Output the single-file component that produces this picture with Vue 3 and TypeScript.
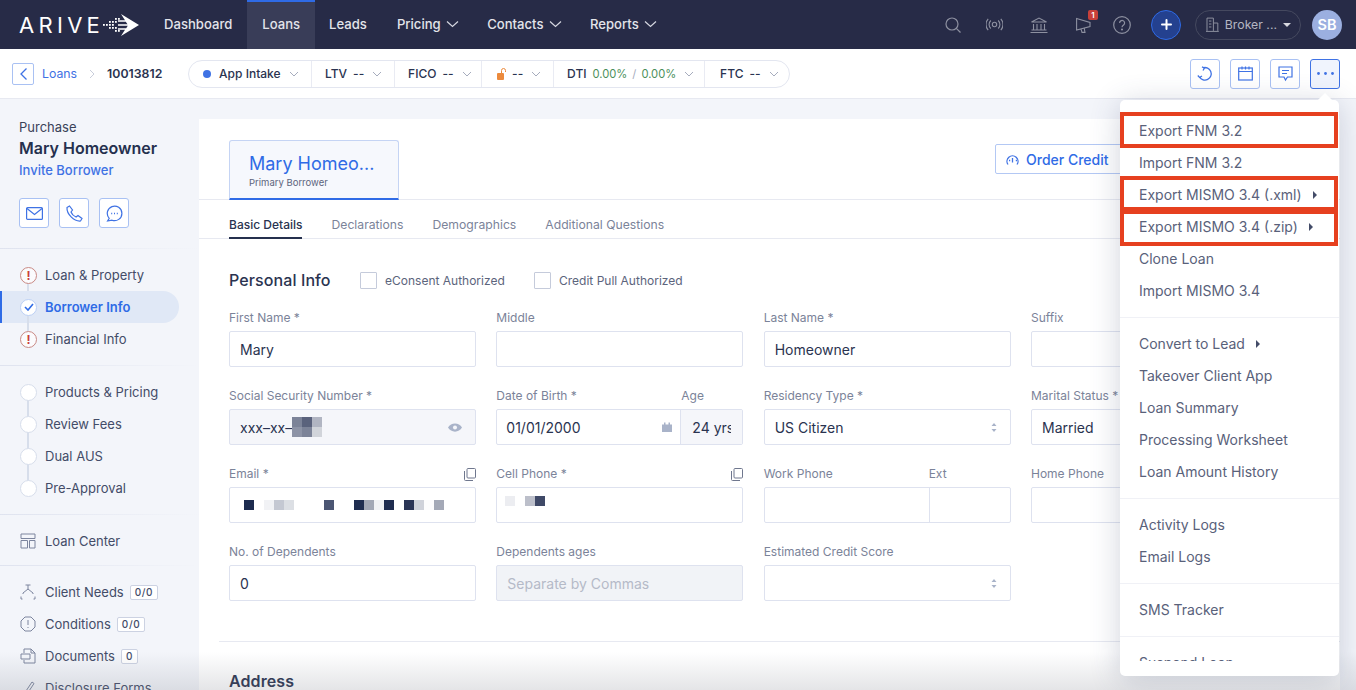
<script setup lang="ts">
const nav = [
  { t: 'Dashboard', active: false, caret: false },
  { t: 'Loans', active: true, caret: false },
  { t: 'Leads', active: false, caret: false },
  { t: 'Pricing', active: false, caret: true },
  { t: 'Contacts', active: false, caret: true },
  { t: 'Reports', active: false, caret: true }
]
const menuGroups = [
  [
    { t: 'Export FNM 3.2' },
    { t: 'Import FNM 3.2' },
    { t: 'Export MISMO 3.4 (.xml)', sub: true },
    { t: 'Export MISMO 3.4 (.zip)', sub: true },
    { t: 'Clone Loan' },
    { t: 'Import MISMO 3.4' }
  ],
  [
    { t: 'Convert to Lead', sub: true },
    { t: 'Takeover Client App' },
    { t: 'Loan Summary' },
    { t: 'Processing Worksheet' },
    { t: 'Loan Amount History' }
  ],
  [{ t: 'Activity Logs' }, { t: 'Email Logs' }],
  [{ t: 'SMS Tracker' }],
  [{ t: 'Suspend Loan' }]
]
const progress = ['Products & Pricing', 'Review Fees', 'Dual AUS', 'Pre-Approval']
const emailBlocks = ['#1d2b4f', '#fff', '#f1f2f5', '#c4c8d2', '#dcdfe4', '#fff', '#fff', '#fff', '#4c5673', '#fff', '#fff', '#1f2d50', '#a2a7b5', '#f0f1f4', '#1f2d50', '#fff', '#2a3556', '#cfd2da', '#fcfcfd', '#a4a9b7']
const phoneBlocks = ['#ecedf1', '#fff', '#bcbfca', '#3f4967']
const ssnBlocks = ['#7c8398', '#5a627c', '#b1b5c2', '#8d93a6', '#7c8398', '#d1d4da']
const logoDots = [
  [0, 10], [3, 10], [6, 7], [6, 10], [6, 13], [9, 7], [9, 10], [9, 13], [12, 4], [12, 7], [12, 13], [12, 16], [15, 4], [15, 16]
]
</script>

<template>
  <div class="page">
    <header class="top">
      <div class="logo">
        <span class="logo-text">ARIVE</span>
        <svg class="logo-mark" width="36" height="22" viewBox="0 0 36 22">
          <rect v-for="(d, i) in logoDots" :key="i" :x="d[0]" :y="d[1]" width="1.800" height="1.800" fill="#fff" />
          <path d="M18 0l18 11-18 11 4-6.200H15v-1.500h8.200l1.600-2.500H15v-1.500h9.500l-1.700-2.500H15V6.200h7z" fill="#fff" />
        </svg>
      </div>
      <nav class="nav">
        <a v-for="n in nav" :key="n.t" class="nav-item" :class="{ on: n.active, caret: n.caret }">
          {{ n.t }}
          <svg v-if="n.caret" width="13" height="8" viewBox="0 0 13 8"><path d="M1 1.500l5.500 5 5.500-5" fill="none" stroke="#d5d7e0" stroke-width="1.200" /></svg>
        </a>
      </nav>
      <div class="top-right">
        <svg class="ti search" width="16" height="16" viewBox="0 0 16 16" fill="none" stroke="#8d90a0" stroke-width="1.200"><circle cx="7" cy="7" r="6" /><path d="M11.300 11.300L15.500 15.500" /></svg>
        <svg class="ti cast" width="17" height="13" viewBox="0 0 17 13" fill="none" stroke="#8d90a0" stroke-width="1.100"><circle cx="8.500" cy="6.500" r="2.200" /><path d="M4.800 2.500a5.500 5.500 0 000 8M12.200 2.500a5.500 5.500 0 010 8M2.200 .8a8.500 8.500 0 000 11.400M14.800 .8a8.500 8.500 0 010 11.400" /></svg>
        <svg class="ti bank" width="18" height="16" viewBox="0 0 18 16" fill="none" stroke="#8d90a0" stroke-width="1.100"><path d="M1.500 5L9 1l7.500 4zM3.500 7v5.500M7 7v5.500M11 7v5.500M14.500 7v5.500M1.500 13h15M.5 15.500h17" /></svg>
        <span class="ti mega">
          <svg width="15" height="16" viewBox="0 0 15 16" fill="none" stroke="#8d90a0" stroke-width="1.100"><path d="M.6 1.500L14 5.500V9.500L.6 13zM5 11.800L6 15.400H9L8.200 11" /></svg>
          <i class="badge">1</i>
        </span>
        <svg class="ti help" width="18" height="18" viewBox="0 0 18 18" fill="none" stroke="#8d90a0" stroke-width="1.200"><circle cx="9" cy="9" r="8.300" /><path d="M6.600 7a2.500 2.500 0 114 2c-1 .7-1.600 1.100-1.600 2.300" /><circle cx="9" cy="13.500" r=".5" fill="#8d90a0" /></svg>
        <span class="plus">
          <svg width="11" height="11" viewBox="0 0 11 11"><path d="M5.500 1v9M1 5.500h9" stroke="#fff" stroke-width="2" stroke-linecap="round" /></svg>
        </span>
        <span class="broker">
          <svg width="13" height="15" viewBox="0 0 13 15" fill="none" stroke="#8d90a0" stroke-width="1"><path d="M1 14V1h6.500v13M7.500 6H12v8M0 14.500h13M3 4h2.500M3 7h2.500M3 10h2.500" /></svg>
          <span class="broker-t">Broker ...</span>
          <i class="tri"></i>
        </span>
        <span class="avatar">SB</span>
      </div>
    </header>

    <div class="sub">
      <span class="back"><svg width="9" height="14" viewBox="0 0 9 14"><path d="M7.500 1.500L2 7l5.500 5.500" fill="none" stroke="#3f72e4" stroke-width="1.300" /></svg></span>
      <a class="crumb">Loans</a>
      <svg class="crumb-sep" width="7" height="10" viewBox="0 0 7 10"><path d="M1 1l4 4-4 4" fill="none" stroke="#c9cedb" stroke-width="1" /></svg>
      <b class="loan-id">10013812</b>
      <div class="pill">
        <div class="seg s1"><i class="dot"></i>App Intake<svg class="chev" width="10" height="6" viewBox="0 0 10 6"><path d="M1 1l4 4 4-4" /></svg></div>
        <div class="seg s2">LTV<span class="dash">--</span><svg class="chev" width="10" height="6" viewBox="0 0 10 6"><path d="M1 1l4 4 4-4" /></svg></div>
        <div class="seg s3">FICO<span class="dash">--</span><svg class="chev" width="10" height="6" viewBox="0 0 10 6"><path d="M1 1l4 4 4-4" /></svg></div>
        <div class="seg s4">
          <svg width="9" height="12" viewBox="0 0 9 12"><rect x="0" y="5" width="7" height="7" rx="1" fill="#ec8a3c" /><path d="M4.500 5V2.500a2 2 0 014 0V4" fill="none" stroke="#ec8a3c" stroke-width="1" /></svg>
          <span class="dash">--</span><svg class="chev" width="10" height="6" viewBox="0 0 10 6"><path d="M1 1l4 4 4-4" /></svg>
        </div>
        <div class="seg s5">DTI<span class="green">0.00%</span><span class="slash">/</span><span class="green g2">0.00%</span><svg class="chev" width="10" height="6" viewBox="0 0 10 6"><path d="M1 1l4 4 4-4" /></svg></div>
        <div class="seg s6">FTC<span class="dash">--</span><svg class="chev" width="10" height="6" viewBox="0 0 10 6"><path d="M1 1l4 4 4-4" /></svg></div>
      </div>
      <div class="sub-actions">
        <span class="sq"><svg width="16" height="16" viewBox="0 0 16 16" fill="none" stroke="#3f72e4" stroke-width="1.300"><path d="M6 1.800A6.300 6.300 0 1 1 2.500 11M5 .8L7.500 2 6 4.500M.8 9.500l1.800 2L5 10" /></svg></span>
        <span class="sq"><svg width="15" height="15" viewBox="0 0 15 15" fill="none" stroke="#3f72e4" stroke-width="1.200"><rect x=".7" y="2" width="13.600" height="12" /><path d="M.7 5.500h13.600M4 .5v3M11 .5v3M7.500 .5v3" /></svg></span>
        <span class="sq"><svg width="15" height="16" viewBox="0 0 15 16" fill="none" stroke="#3f72e4" stroke-width="1.200"><path d="M1 1h13v10H9.500L7.500 14 6 11H1zM4 4.500h7M4 7.500h5" /></svg></span>
        <span class="sq act"><svg width="17" height="3" viewBox="0 0 17 3" fill="#3f72e4"><circle cx="1.500" cy="1.500" r="1.400" /><circle cx="8.500" cy="1.500" r="1.400" /><circle cx="15.500" cy="1.500" r="1.400" /></svg></span>
      </div>
    </div>

    <div class="body">
      <aside class="side">
        <section class="who">
          <div class="purpose">Purchase</div>
          <div class="name">Mary Homeowner</div>
          <a class="invite">Invite Borrower</a>
          <div class="contact">
            <span class="sq"><svg width="17" height="13" viewBox="0 0 17 13" fill="none" stroke="#3f72e4" stroke-width="1.200"><rect x=".6" y=".6" width="15.800" height="11.800" rx="1" /><path d="M1 1.500l7.500 6 7.500-6" /></svg></span>
            <span class="sq"><svg width="17" height="17" viewBox="0 0 17 17" fill="none" stroke="#3f72e4" stroke-width="1.200"><path d="M1 2.500L3.500 1l3 4L5 7c.8 2.200 2.500 4 5 5l2-1.500 4 3L14.500 16C8 16.500 .5 9 1 2.500z" /></svg></span>
            <span class="sq"><svg width="17" height="17" viewBox="0 0 17 17" fill="none" stroke="#3f72e4" stroke-width="1.200"><path d="M3.200 13.300A7.300 7.300 0 1 1 6 15.200L1.600 16z" /><path d="M5.200 8.500h1M8 8.500h1M10.800 8.500h1" stroke-width="1.300" /></svg></span>
          </div>
        </section>

        <section class="group steps">
          <div class="row"><span class="mark err">!</span>Loan &amp; Property</div>
          <div class="row cur"><span class="mark ok"><svg width="10" height="8" viewBox="0 0 10 8"><path d="M1 4l3 3 5-6" fill="none" stroke="#2f6be6" stroke-width="1.600" /></svg></span>Borrower Info</div>
          <div class="row"><span class="mark err">!</span>Financial Info</div>
        </section>

        <section class="group steps">
          <div v-for="p in progress" :key="p" class="row"><span class="mark"></span>{{ p }}</div>
        </section>

        <section class="group single">
          <div class="row">
            <svg class="ic" width="16" height="16" viewBox="0 0 16 16" fill="none" stroke="#7c859e" stroke-width="1"><path d="M1 1h14v4.500H1zM1 7.500h6.500V15H1zM9.500 7.500H15V15H9.500z" /></svg>
            Loan Center
          </div>
        </section>

        <section class="group tools">
          <div class="row">
            <svg class="ic" width="16" height="16" viewBox="0 0 16 16" fill="none" stroke="#7c859e" stroke-width="1"><path d="M5.500 1h5M8 1v4M8 5L3 9v1M8 5l5 4v1M1 15h1.500M13.500 15H15M1 12.500V15M15 12.500V15" /></svg>
            Client Needs<span class="count">0/0</span>
          </div>
          <div class="row">
            <svg class="ic" width="16" height="16" viewBox="0 0 16 16" fill="none" stroke="#7c859e" stroke-width="1"><path d="M5 1h6l4 4v6l-4 4H5l-4-4V5z" /><path d="M8 4v5M8 11v1" /></svg>
            Conditions<span class="count">0/0</span>
          </div>
          <div class="row">
            <svg class="ic" width="16" height="16" viewBox="0 0 16 16" fill="none" stroke="#7c859e" stroke-width="1"><path d="M4 5V1h7l4 4v10H4v-3M11 1v4h4M1 6h9v5H1z" /></svg>
            Documents<span class="count">0</span>
          </div>
          <div class="row">
            <svg class="ic" width="16" height="16" viewBox="0 0 16 16" fill="none" stroke="#7c859e" stroke-width="1"><path d="M1 12c2-3 3 1 5-1M6 11l6-9 2 1.500-6 9z" /></svg>
            Disclosure Forms
          </div>
        </section>
      </aside>

      <main class="card">
        <div class="card-head">
          <div class="borrower-tab">
            <div class="b-name">Mary Homeo...</div>
            <div class="b-role">Primary Borrower</div>
          </div>
          <button class="order">
            <svg width="13" height="11" viewBox="0 0 13 11" fill="none" stroke="#3f72e4" stroke-width="1.300"><path d="M2 10.500a5.500 5.500 0 1 1 9 0M6.500 4v4.500M3 6.500h1.200M9.800 6.500H11" /></svg>
            Order Credit
          </button>
        </div>
        <div class="tabs">
          <a class="tab on">Basic Details</a>
          <a class="tab">Declarations</a>
          <a class="tab">Demographics</a>
          <a class="tab">Additional Questions</a>
        </div>

        <div class="form">
          <div class="title-row">
            <h2>Personal Info</h2>
            <label class="chk"><i></i>eConsent Authorized</label>
            <label class="chk"><i></i>Credit Pull Authorized</label>
          </div>

          <div class="grid">
            <div class="f"><div class="lab">First Name *</div><div class="inp">Mary</div></div>
            <div class="f"><div class="lab">Middle</div><div class="inp"></div></div>
            <div class="f"><div class="lab">Last Name *</div><div class="inp">Homeowner</div></div>
            <div class="f"><div class="lab">Suffix</div><div class="inp"></div></div>

            <div class="f">
              <div class="lab">Social Security Number *</div>
              <div class="inp dis">
                <span>xxx–xx–</span>
                <span class="ssn"><i v-for="(c, i) in ssnBlocks" :key="i" :style="{ background: c }"></i></span>
                <svg class="end" width="14" height="9" viewBox="0 0 14 9"><path d="M0 4.500C3-1 11-1 14 4.500 11 10 3 10 0 4.500z" fill="#a9b3c9" /><circle cx="7" cy="4.500" r="2" fill="#f5f6fa" /></svg>
              </div>
            </div>
            <div class="f">
              <div class="lab split"><span>Date of Birth *</span><span class="age-lab">Age</span></div>
              <div class="inp dob">
                <span class="dob-v">01/01/2000<svg class="end" width="10" height="10" viewBox="0 0 10 10"><path d="M0 2.500h10V10H0zM2 .5h1.500v2H2zM6.500 .5H8v2H6.500z" fill="#a9b3c9" /></svg></span>
                <span class="age"><span class="age-t">24 yrs</span></span>
              </div>
            </div>
            <div class="f">
              <div class="lab">Residency Type *</div>
              <div class="inp">US Citizen<svg class="end" width="6" height="9" viewBox="0 0 6 9" fill="#a9b3c9"><path d="M3 0l2.500 3h-5zM3 9L.5 6h5z" /></svg></div>
            </div>
            <div class="f"><div class="lab">Marital Status *</div><div class="inp">Married</div></div>

            <div class="f">
              <div class="lab copy">Email *<svg width="12" height="13" viewBox="0 0 12 13" fill="none" stroke="#6f778e" stroke-width="1"><rect x="3" y=".5" width="8.500" height="9.500" rx="1" /><path d="M.5 3v8.500a1 1 0 001 1H9" /></svg></div>
              <div class="inp blur-row"><i v-for="(c, i) in emailBlocks" :key="i" :style="{ background: c }"></i></div>
            </div>
            <div class="f">
              <div class="lab copy">Cell Phone *<svg width="12" height="13" viewBox="0 0 12 13" fill="none" stroke="#6f778e" stroke-width="1"><rect x="3" y=".5" width="8.500" height="9.500" rx="1" /><path d="M.5 3v8.500a1 1 0 001 1H9" /></svg></div>
              <div class="inp blur-row phone"><i v-for="(c, i) in phoneBlocks" :key="i" :style="{ background: c }"></i></div>
            </div>
            <div class="f">
              <div class="lab split"><span>Work Phone</span><span class="ext-lab">Ext</span></div>
              <div class="inp work"><span></span><span class="ext"></span></div>
            </div>
            <div class="f"><div class="lab">Home Phone</div><div class="inp"></div></div>

            <div class="f"><div class="lab">No. of Dependents</div><div class="inp">0</div></div>
            <div class="f"><div class="lab">Dependents ages</div><div class="inp ph">Separate by Commas</div></div>
            <div class="f">
              <div class="lab">Estimated Credit Score</div>
              <div class="inp"><svg class="end" width="6" height="9" viewBox="0 0 6 9" fill="#a9b3c9"><path d="M3 0l2.500 3h-5zM3 9L.5 6h5z" /></svg></div>
            </div>
          </div>

          <hr class="rule" />
          <h2 class="addr">Address</h2>
        </div>
      </main>
    </div>

    <div class="fade"></div>

    <div class="menu">
      <i class="notch"></i>
      <div class="menu-scroll">
        <div v-for="(g, gi) in menuGroups" :key="gi" class="menu-group">
          <div v-for="m in g" :key="m.t" class="menu-item">
            {{ m.t }}<i v-if="m.sub" class="mtri"></i>
          </div>
        </div>
      </div>
      <div class="mark-box b1"></div>
      <div class="mark-box b2"></div>
      <div class="mark-box b3"></div>
    </div>
  </div>
</template>

<style>
html, body { margin: 0; overflow: hidden; }
</style>

<style scoped>
* { box-sizing: border-box; }
.page { position: relative; width: 1356px; height: 690px; overflow: hidden; font-family: Inter, "Liberation Sans", sans-serif; font-size: 13px; color: #2a3350; background: #f3f5fa; display: flex; flex-direction: column; }
.top { height: 49px; flex: none; background: #272b47; display: flex; align-items: stretch; color: #fff; padding-left: 19px; }
.logo { width: 130px; display: flex; align-items: center; }
.logo-text { font-size: 22px; font-weight: 400; letter-spacing: 4.300px; color: #fff; }
.logo-mark { margin-left: -1px; flex: none; }
.nav { display: flex; }
.nav-item { display: flex; align-items: center; gap: 6px; padding: 0 15px 4px; font-size: 13.100px; font-weight: 500; color: #e3e4ea; border-top: 2px solid transparent; }
.nav-item.on { background: #393d58; border-top-color: #2f6be6; }
.nav-item.on + .nav-item { padding-left: 14px; }
.nav-item.caret { gap: 5.500px; padding-right: 13px; }
.top-right { margin-left: auto; display: flex; align-items: center; padding-right: 14px; }
.ti { flex: none; }
.search { margin-right: 25px; }
.cast { margin-right: 27px; }
.bank { margin-right: 28px; }
.mega { position: relative; display: flex; margin-right: 22px; }
.badge { position: absolute; top: -7px; left: 12px; width: 10px; height: 10px; border-radius: 2px; background: #c9403a; color: #fff; font-style: normal; font-size: 8px; font-weight: 600; text-align: center; line-height: 10px; }
.plus { width: 30px; height: 30px; border-radius: 50%; background: #24418f; border: 1px solid #2f6be6; display: flex; align-items: center; justify-content: center; margin-left: 20px; margin-right: 14px; }
.broker { width: 106px; height: 30px; border: 1px solid #45495f; border-radius: 15px; display: flex; align-items: center; padding: 0 9px 0 10px; gap: 6px; color: #b4b6c2; font-size: 12.300px; margin-right: 11px; }
.broker-t { white-space: nowrap; }
.tri { margin-left: auto; width: 0; height: 0; border: 4px solid transparent; border-top: 4.500px solid #d8d9e0; border-bottom: 0; }
.avatar { width: 30px; height: 30px; border-radius: 50%; background: #9bafe0; color: #fff; font-size: 14.500px; font-weight: 600; display: flex; align-items: center; justify-content: center; }

.sub { height: 50px; flex: none; background: #fff; border-bottom: 1px solid #e7e9f1; display: flex; align-items: center; padding: 0 16px 0 12px; }
.back { width: 22px; height: 22px; border: 1px solid #a9c1f3; border-radius: 2px; display: flex; align-items: center; justify-content: center; margin-right: 8px; }
.crumb { color: #3f72e4; font-size: 12.300px; }
.crumb-sep { margin: 0 11px 0 12px; }
.loan-id { font-size: 12.300px; font-weight: 600; color: #2a3350; width: 81px; flex: none; }
.pill { display: flex; height: 28px; border: 1px solid #e3e6f0; border-radius: 14px; font-size: 12px; font-weight: 500; }
.seg { display: flex; align-items: center; padding-left: 13px; border-left: 1px solid #e9ebf3; }
.seg:first-child { border-left: 0; padding-left: 14px; }
.s1 { width: 122px; }
.s2 { width: 83px; }
.s3 { width: 87px; }
.s4 { width: 72px; padding-left: 15px; }
.s5 { width: 151px; }
.s6 { width: 85px; padding-left: 15px; }
.dot { width: 8px; height: 8px; border-radius: 50%; background: #3f72e4; margin-right: 8px; }
.dash { margin-left: 6px; }
.chev { margin-left: 8px; fill: none; stroke: #a6acbd; stroke-width: 1; }
.green { color: #4b8f5a; font-size: 11.200px; font-weight: 400; margin-left: 6px; }
.green.g2 { margin-left: 5px; }
.slash { color: #a6acbd; font-size: 11.200px; margin-left: 5px; font-weight: 400; }
.sub-actions { margin-left: auto; display: flex; gap: 10px; }
.sq { width: 30px; height: 30px; border: 1px solid #a9c1f3; border-radius: 3px; background: #fff; display: flex; align-items: center; justify-content: center; }
.sq.act { background: #f0f4fd; border-color: #3f72e4; }

.body { flex: 1; display: flex; min-height: 0; }
.side { width: 199px; flex: none; padding-top: 20px; overflow: hidden; }
.who { padding: 0 0 20px 19px; }
.purpose { font-size: 13px; line-height: 16px; color: #3a4258; }
.name { font-size: 16px; font-weight: 600; line-height: 26px; color: #25304e; }
.invite { display: block; font-size: 13px; font-weight: 500; line-height: 18px; color: #3f72e4; }
.contact { display: flex; gap: 10px; margin-top: 19px; }
.group { border-top: 1px solid; border-image: linear-gradient(90deg, #dfe3ef, #f3f5fa) 1; padding: 10px 0; }
.row { position: relative; height: 32px; display: flex; align-items: center; padding-left: 19px; color: #434c68; font-size: 13px; }
.mark { position: relative; z-index: 1; width: 17px; height: 17px; border-radius: 50%; background: #fff; border: 1px solid #d7deeb; margin: 0 8px 0 1px; display: flex; align-items: center; justify-content: center; flex: none; }
.mark.err { border-color: #c98a85; color: #c9403a; font-weight: 700; font-size: 12px; background: #fbfbfd; }
.mark.ok { border-color: #bcd0f5; }
.steps .row:not(:last-child)::before { content: ""; position: absolute; left: 27px; top: 16px; height: 32px; width: 2px; background: #d7deeb; }
.row.cur { background: #e0e8f6; border-radius: 0 16px 16px 0; width: 179px; border-left: 2px solid #2f6be6; padding-left: 17px; color: #2f6be6; font-weight: 600; }
.row.cur::before { left: 25px !important; }
.ic { margin: 0 9px 0 1px; flex: none; }
.count { margin-left: 6px; padding: 0 4px; height: 15px; border: 1px solid #ccd2e2; border-radius: 2px; font-size: 10px; line-height: 13px; letter-spacing: .6px; color: #434c68; background: #fff; font-weight: 500; }
.single { padding: 10px 0 8px; }

.card { flex: none; width: 1141px; margin-top: 20px; background: #fff; overflow: hidden; }
.card-head { height: 81px; border-bottom: 1px solid #e7e9f1; display: flex; padding: 21px 0 0 30px; position: relative; }
.borrower-tab { width: 170px; height: 60px; border: 1px solid #c5d4f4; border-bottom: 2px solid #2f6be6; border-radius: 3px 3px 0 0; background: #f6f8fd; padding: 11px 0 0 19px; }
.b-name { font-size: 18px; line-height: 24px; color: #2f6be6; font-weight: 400; }
.b-role { font-size: 9.500px; color: #5c647c; line-height: 13px; }
.order { margin: 4px 0 0 596px; width: 140px; height: 30px; padding: 0 0 0 10px; display: flex; align-items: center; gap: 7px; background: #fff; border: 1px solid #b3c8f4; border-radius: 2px; color: #2f6be6; font: 500 14px Inter, sans-serif; }
.tabs { height: 39px; display: flex; gap: 29px; padding-left: 30px; border-bottom: 1px solid #e7e9f1; }
.tab { font-size: 12.200px; color: #7b8399; height: 39px; white-space: nowrap; line-height: 50px; }
.tab.on { font-size: 12px; color: #2a3350; font-weight: 500; border-bottom: 2px solid #25304e; }
.form { padding: 0 0 0 30px; }
.title-row { height: 70px; display: flex; align-items: center; padding-top: 12px; }
h2 { margin: 0; font-size: 16px; font-weight: 500; color: #2a3350; letter-spacing: .1px; }
.title-row h2 { width: 131px; flex: none; }
.chk { display: flex; align-items: center; gap: 8px; width: 174px; font-size: 12px; color: #5c647c; }
.chk i { width: 17px; height: 17px; border: 1px solid #c5cbdb; background: #fff; border-radius: 1px; }
.grid { display: grid; grid-template-columns: repeat(4, 247px); column-gap: 20.340px; row-gap: 6px; }
.f { height: 72px; }
.lab { height: 22px; line-height: 18px; font-size: 12px; color: #7b8399; display: flex; align-items: flex-start; }
.lab.split span:first-child { width: 185px; }
.lab.split .ext-lab { margin-left: -20px; }
.lab.copy { justify-content: space-between; }
.lab.copy svg { margin-top: 3px; }
.inp { position: relative; height: 36px; border: 1px solid #dee2ef; border-radius: 2px; background: #fff; display: flex; align-items: center; padding-left: 10px; font-size: 14px; color: #2a3350; overflow: hidden; }
.inp.dis { background: #f5f6fa; }
.inp.ph { background: #f1f3f7; color: #b5bac8; }
.end { margin-left: auto; margin-right: 13px; flex: none; }
.ssn { display: grid; grid-template-columns: repeat(3, 10px); grid-auto-rows: 10px; }
.ssn i { display: block; }
.dob { padding: 0; }
.dob-v { flex: none; width: 184px; height: 100%; display: flex; align-items: center; padding-left: 9px; border-right: 1px solid #dee2ef; }
.dob-v .end { margin-right: 8px; }
.age { flex: 1; background: #f5f6fa; height: 100%; display: flex; align-items: center; padding-left: 11px; }
.age-t { width: 39px; overflow: hidden; white-space: nowrap; }
.work { padding: 0; }
.work span:first-child { width: 165px; height: 100%; border-right: 1px solid #dee2ef; }
.blur-row { padding-left: 14px; }
.blur-row i { width: 10px; height: 10px; flex: none; }
.blur-row.phone { padding-left: 8px; padding-bottom: 8px; }
.rule { border: 0; border-top: 1px solid #e7e9f1; margin: 26px 0 0 -10px; }
.addr { margin-top: 29px; font-weight: 600; }

.fade { position: absolute; left: 0; right: 0; bottom: 0; height: 38px; background: linear-gradient(180deg, rgba(120,124,135,0), rgba(120,124,135,.2)); pointer-events: none; }
.menu { position: absolute; left: 1120px; top: 100px; width: 219px; height: 576px; background: #fff; border-radius: 5px; box-shadow: 0 4px 30px rgba(60,70,110,.24); }
.notch { position: absolute; top: -5px; left: 200px; width: 10px; height: 10px; background: #fff; transform: rotate(45deg); }
.menu-scroll { position: relative; height: 561px; overflow: hidden; padding-top: 15px; }
.menu-group { padding-bottom: 10px; margin-bottom: 10px; border-bottom: 1px solid #f0f1f6; }
.menu-item { height: 32px; display: flex; align-items: center; padding: 0 0 1px 19px; font-size: 14px; color: #59617a; white-space: nowrap; }
.mtri { width: 0; height: 0; border: 4px solid transparent; border-left: 4.500px solid #434c68; border-right: 0; margin-left: 11px; }
.mark-box { position: absolute; left: 0; width: 218px; border: 4px solid #e6401f; }
.b1 { top: 12px; height: 36px; }
.b2 { top: 76px; height: 35px; }
.b3 { top: 110px; height: 36px; }
</style>
